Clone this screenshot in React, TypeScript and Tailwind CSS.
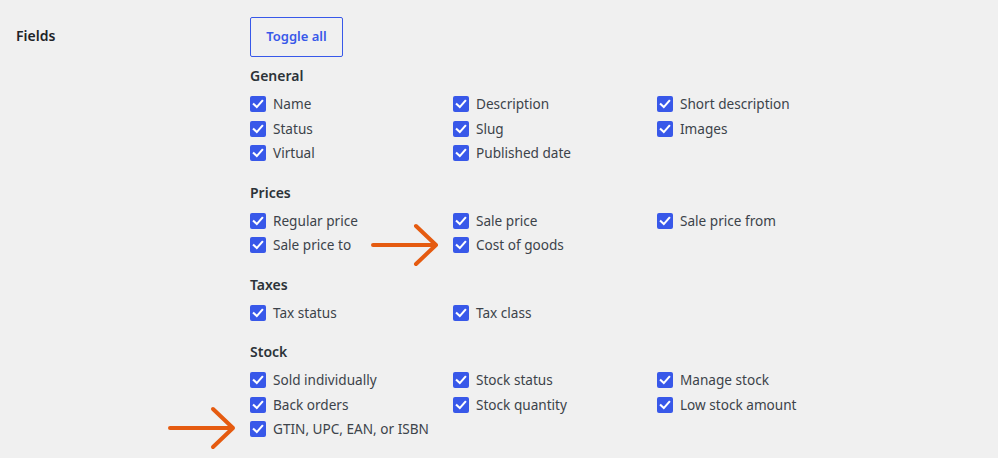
import React from 'react';

type Section = { title: string; items: string[] };

const sections: Section[] = [
  {
    title: 'General',
    items: ['Name', 'Description', 'Short description', 'Status', 'Slug', 'Images', 'Virtual', 'Published date'],
  },
  {
    title: 'Prices',
    items: ['Regular price', 'Sale price', 'Sale price from', 'Sale price to', 'Cost of goods'],
  },
  {
    title: 'Taxes',
    items: ['Tax status', 'Tax class'],
  },
  {
    title: 'Stock',
    items: [
      'Sold individually',
      'Stock status',
      'Manage stock',
      'Back orders',
      'Stock quantity',
      'Low stock amount',
      'GTIN, UPC, EAN, or ISBN',
    ],
  },
];

const Checkbox: React.FC = () => (
  <span className="w-4 h-4 rounded-[2px] bg-[#3858e9] flex items-center justify-center shrink-0">
    <svg width="16" height="16" viewBox="0 0 16 16" fill="none">
      <path d="M3.8 8.2 L6.8 11.1 L12.2 4.9" stroke="white" strokeWidth="2.1" strokeLinecap="square" />
    </svg>
  </span>
);

const Arrow: React.FC<{ className: string }> = ({ className }) => (
  <svg className={className} width="72" height="46" viewBox="0 0 72 46" fill="none">
    <path
      d="M3 23 H66 M46 4 L66 23 L46 42"
      stroke="#e55b10"
      strokeWidth="4"
      strokeLinecap="round"
      strokeLinejoin="round"
    />
  </svg>
);

const App: React.FC = () => {
  return (
    <div
      className="relative w-full h-[458px] bg-[#f0f0f0] overflow-hidden"
      style={{ fontFamily: '"Noto Sans", sans-serif' }}
    >
      <div className="flex px-4 pt-[17px]">
        {/* Label */}
        <div className="w-[234px] pt-[9px] text-[14px] font-semibold text-[#1d2327] leading-[20px]">
          Fields
        </div>

        {/* Options */}
        <div className="flex flex-col">
          <button className="w-[93px] h-10 border border-[#3858e9] rounded-[2px] text-[13px] font-semibold text-[#3858e9]">
            Toggle all
          </button>

          {sections.map((section, i) => (
            <div key={section.title} className={i === 0 ? 'mt-[9px]' : 'mt-[17px]'}>
              <h3 className="text-[14px] font-semibold text-[#2c3338] leading-[20px] mb-[6px]">
                {section.title}
              </h3>
              <div className="grid grid-cols-[203px_204px_200px]">
                {section.items.map((item) => (
                  <label key={item} className="flex items-center gap-[7px] h-[24.5px] text-[13.6px] text-[#3c434a]">
                    <Checkbox />
                    <span>{item}</span>
                  </label>
                ))}
              </div>
            </div>
          ))}
        </div>
      </div>

      {/* Annotation arrows */}
      <Arrow className="absolute left-[370px] top-[222px]" />
      <Arrow className="absolute left-[167px] top-[405px]" />
    </div>
  );
};

export default App;
